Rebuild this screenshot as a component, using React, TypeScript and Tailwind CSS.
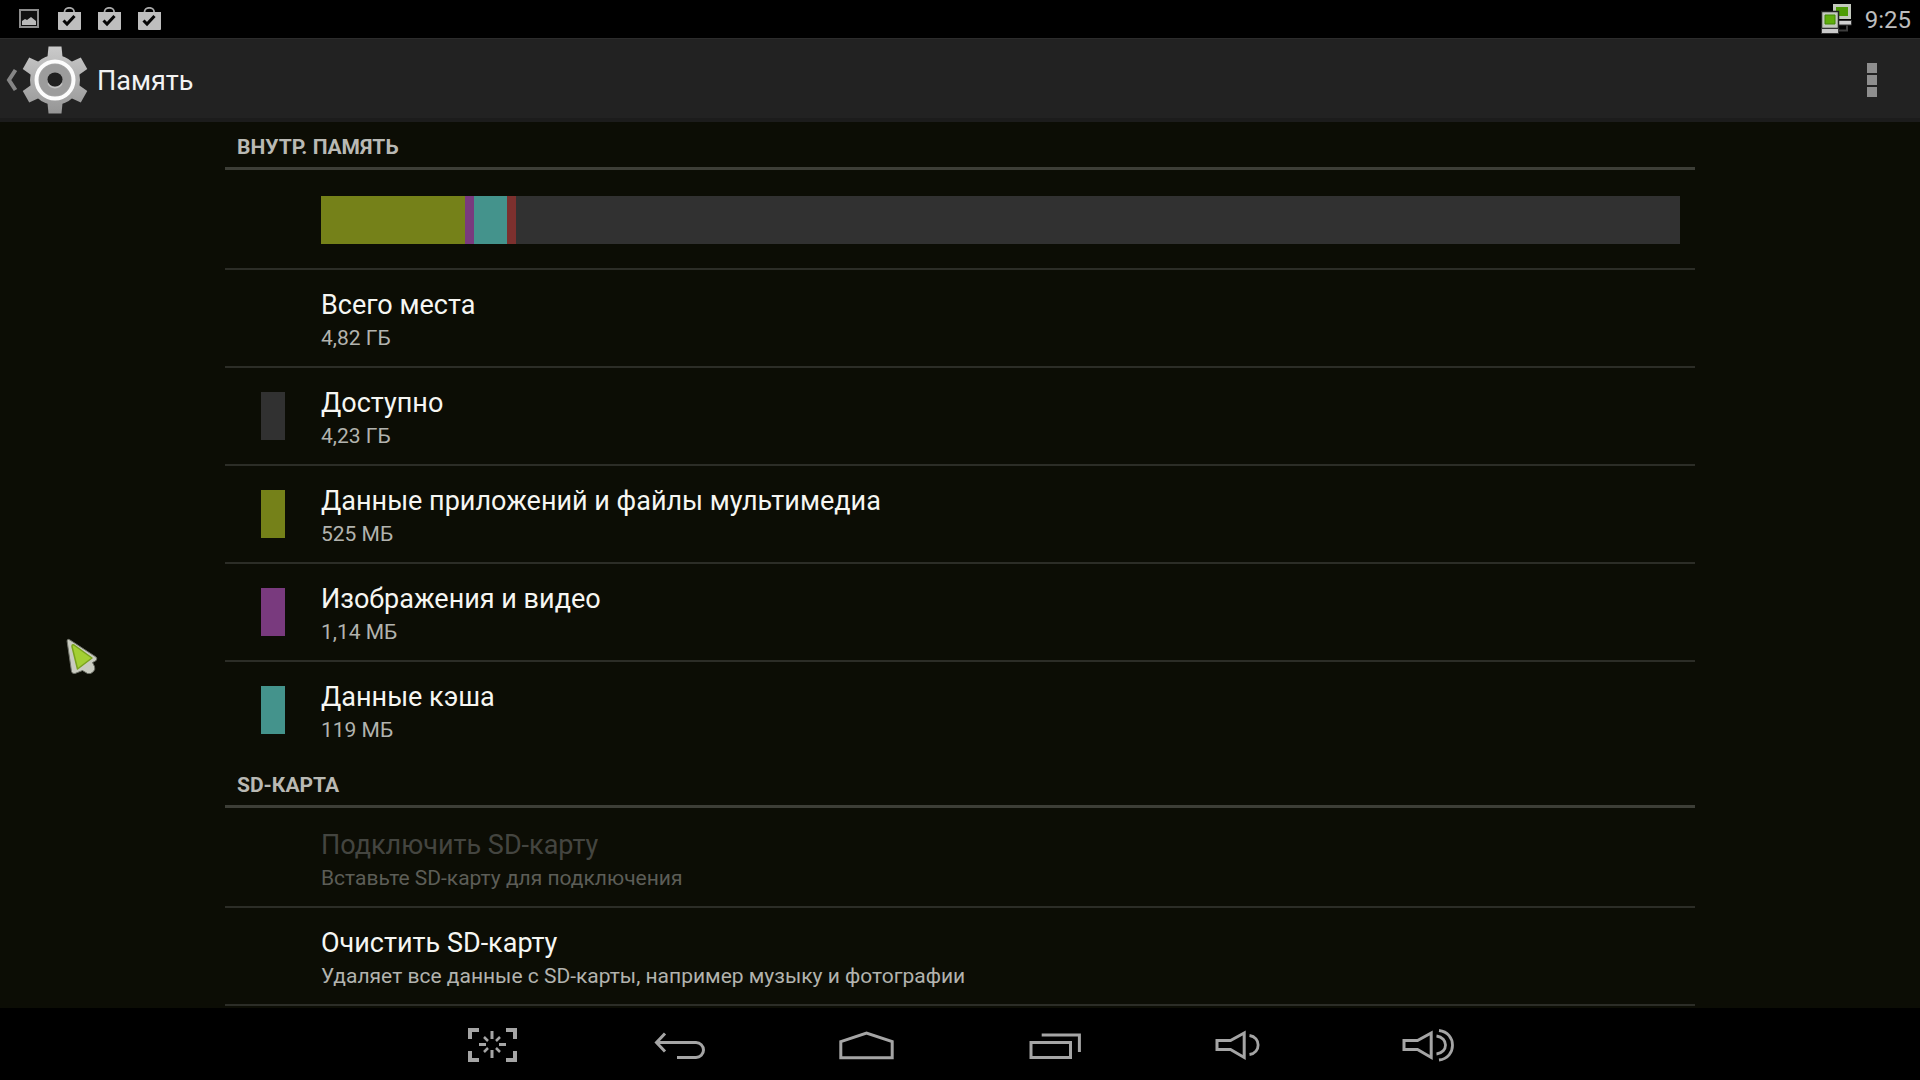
import type { ReactNode } from "react";

type Row = { title: string; summary: string; swatch?: string };

const storage: Row[] = [
  { title: "Всего места", summary: "4,82 ГБ" },
  { title: "Доступно", summary: "4,23 ГБ", swatch: "bg-[#313131]" },
  { title: "Данные приложений и файлы мультимедиа", summary: "525 МБ", swatch: "bg-[#758119]" },
  { title: "Изображения и видео", summary: "1,14 МБ", swatch: "bg-[#793a7e]" },
  { title: "Данные кэша", summary: "119 МБ", swatch: "bg-[#44938c]" },
];

const usage = [
  { name: "Приложения", width: 144, color: "bg-[#758119]" },
  { name: "Изображения", width: 9, color: "bg-[#793a7e]" },
  { name: "Кэш", width: 33, color: "bg-[#44938c]" },
  { name: "Прочее", width: 9, color: "bg-[#7c302e]" },
];

function SectionHeader({ children }: { children: ReactNode }) {
  return (
    <div className="pb-0.5">
      <h2 className="flex h-12 items-center border-b-3 border-[#3d3e37] pl-3 pt-1 text-[21px] font-bold leading-6 text-[#b9b9b4]">
        {children}
      </h2>
    </div>
  );
}

function RowText({ title, summary, disabled }: Row & { disabled?: boolean }) {
  return (
    <span className="flex flex-col pt-1.5 text-left">
      <span
        className={
          disabled ? "text-[27px] leading-[34px] text-[#444540]" : "text-[27px] leading-[34px] text-[#f6f6f2]"
        }
      >
        {title}
      </span>
      <span className={disabled ? "text-[21px] leading-8 text-[#5c5d57]" : "text-[21px] leading-8 text-[#b2b3ae]"}>
        {summary}
      </span>
    </span>
  );
}

function PictureIcon() {
  return (
    <svg className="h-6 w-6" viewBox="0 0 24 24" aria-hidden="true">
      <rect x="3" y="3" width="18" height="17" fill="#111" stroke="#8d8d8d" strokeWidth="2" />
      <path d="M5 18v-4l3-2 2 1 4-3 5 4v4z" fill="#b9b9b9" />
    </svg>
  );
}

function BagIcon() {
  return (
    <svg className="h-6 w-6" viewBox="0 0 24 24" aria-hidden="true">
      <path d="M7.500 6V5a4.800 4.200 0 0 1 9.600 0v1" fill="none" stroke="#a9a9a9" strokeWidth="1.800" />
      <path d="M1 5h23v17.500l-1 .500H2l-1-.500z" fill="#bebebe" />
      <path d="m6.500 13.500 3.500 3.500 7.500-8" fill="none" stroke="#050505" strokeWidth="3" />
    </svg>
  );
}

function NetworkIcon() {
  return (
    <svg className="h-8 w-8" viewBox="0 0 32 32" aria-hidden="true">
      <path d="M12 1h18v15H12z" fill="#c3c9bd" />
      <path d="M15 4h12v9H15z" fill="#4d9c05" />
      <path d="M17 17.500h13.500v4.500H17z" fill="#d0d0d0" stroke="#333" strokeWidth="1" />
      <path d="M26 22.500v5h-8" fill="none" stroke="#3d3d3d" strokeWidth="2" />
      <path d="M.500 8.500h17v17H.500z" fill="#c3c9bd" stroke="#222" strokeWidth="1.500" />
      <path d="M4 12h10v9H4z" fill="#5fae0b" stroke="#438806" strokeWidth="1" />
      <path d="M.500 25.500h17v5H.500z" fill="#c9c9c9" stroke="#333" strokeWidth="1" />
    </svg>
  );
}

function GearIcon() {
  const teeth = [0, 60, 120, 180, 240, 300];
  return (
    <svg className="h-[68px] w-[66px]" viewBox="0 0 66 68" aria-hidden="true">
      <defs>
        <linearGradient id="steel" x1="0" y1="0" x2="0" y2="68" gradientUnits="userSpaceOnUse">
          <stop offset="0" stopColor="#cbcbcb" />
          <stop offset="1" stopColor="#959595" />
        </linearGradient>
      </defs>
      <mask id="teeth">
        {teeth.map((angle) => (
          <path key={angle} d="M26.500 .500h13L41 16H25z" fill="#fff" transform={`rotate(${angle} 33 34)`} />
        ))}
        <circle cx="33" cy="34" r="25" fill="#fff" />
      </mask>
      <rect width="66" height="68" fill="url(#steel)" mask="url(#teeth)" />
      <circle cx="33" cy="34" r="18.500" fill="#a2a2a2" stroke="#fcfcfc" strokeWidth="4" />
      <circle cx="33" cy="34" r="15.500" fill="#9c9c9c" />
      <ellipse cx="33" cy="33.500" rx="7.500" ry="7" fill="#202020" />
      <path d="M26 37.500a8 8 0 0 0 14 0" fill="none" stroke="#c4c4c4" strokeWidth="1.500" />
    </svg>
  );
}

function NavButton({ label, children }: { label: string; children: ReactNode }) {
  return (
    <button type="button" aria-label={label} className="flex h-[72px] w-[187px] items-center justify-center">
      <svg className="h-10 w-[61px]" viewBox="0 0 61 40" fill="none" stroke="#a5a5a5" strokeWidth="3" aria-hidden="true">
        {children}
      </svg>
    </button>
  );
}

const speaker = "M7 16.500h13.500L34.200 9v24.500L20.500 25.500H7z";

export default function App() {
  return (
    <div className="relative flex min-h-screen flex-col bg-[#0c0d05] font-['Roboto','Noto_Sans',sans-serif]">
      <header>
        <div className="flex h-[38px] items-center justify-between bg-black pl-[17px] pr-[9px]">
          <div className="flex items-center gap-4">
            <PictureIcon />
            <BagIcon />
            <BagIcon />
            <BagIcon />
          </div>
          <div className="flex items-center gap-3">
            <NetworkIcon />
            <time className="pt-0.5 text-2xl text-[#bdbdbd]">9:25</time>
          </div>
        </div>
        <div className="flex h-[84px] items-center justify-between border-t border-b-4 border-t-[#2c2c2c] border-b-[#1c1c1c] bg-[#222222] pl-1.5 pr-[37px] pt-0.5">
          <button type="button" className="flex items-center" aria-label="Назад">
            <svg className="h-6 w-4" viewBox="0 0 16 24" fill="none" aria-hidden="true">
              <path d="M9.500 2 3 12l6.500 10" stroke="#858585" strokeWidth="4" />
            </svg>
            <GearIcon />
            <h1 className="pl-[9px] pt-0.5 text-[27px] leading-8 text-[#f3f3f3]">Память</h1>
          </button>
          <button type="button" aria-label="Ещё" className="flex flex-col items-center gap-0.5 px-1.5">
            <span className="size-2.5 bg-[#8e8e8e]" />
            <span className="size-2.5 bg-[#8e8e8e]" />
            <span className="size-2.5 bg-[#8e8e8e]" />
          </button>
        </div>
      </header>

      <main className="flex-1 px-[225px]">
        <section>
          <SectionHeader>ВНУТР. ПАМЯТЬ</SectionHeader>
          <div className="border-b-2 border-[#2c2d27] py-6 pl-24 pr-[15px]">
            <div className="flex h-12 bg-[#313131]">
              {usage.map((part) => (
                <div key={part.name} className={part.color} style={{ width: part.width }} />
              ))}
            </div>
          </div>
          <ul>
            {storage.map((row) => (
              <li
                key={row.title}
                className="flex h-[98px] items-center gap-9 border-b-2 border-[#2c2d27] pl-9 last:border-transparent"
              >
                <span className={row.swatch ? `h-12 w-6 ${row.swatch}` : "h-12 w-6"} />
                <RowText {...row} />
              </li>
            ))}
          </ul>
        </section>
        <section>
          <SectionHeader>SD-КАРТА</SectionHeader>
          <button type="button" disabled className="flex h-[98px] w-full items-center border-b-2 border-[#2c2d27] pl-24">
            <RowText title="Подключить SD-карту" summary="Вставьте SD-карту для подключения" disabled />
          </button>
          <button type="button" className="flex h-[98px] w-full items-center border-b-2 border-[#2c2d27] pl-24">
            <RowText title="Очистить SD-карту" summary="Удаляет все данные с SD-карты, например музыку и фотографии" />
          </button>
        </section>
      </main>

      <nav className="flex justify-center bg-black">
        <NavButton label="Снимок экрана">
          <path d="M17 6H8v9M44 6h9v9M17 36H8v-9M44 36h9v-9" strokeWidth="4" />
          <path d="M30 7v8M30 26v8M17 20.500h7M37 20.500h7" />
          <path d="m22 13 4 4M38 13l-4 4M22 28l4-4M38 28l-4-4" strokeWidth="2.500" />
        </NavButton>
        <NavButton label="Назад">
          <path d="m16 9.500-8.500 9 8.500 9" />
          <path d="M8 18.500h39a7.500 7.500 0 0 1 0 15H28" />
        </NavButton>
        <NavButton label="Домой">
          <path d="m4.800 17.700 25.700-8.700 25.700 8.700v16H4.800z" />
        </NavButton>
        <NavButton label="Недавние">
          <path d="M8 18.500h39.500v15H8zM18.700 11h37.700v17" />
        </NavButton>
        <NavButton label="Тише">
          <path d={speaker} />
          <path d="M39.500 11.500c11.500 1.500 11.500 17.500 0 19" strokeWidth="2.800" />
        </NavButton>
        <NavButton label="Громче">
          <path d={speaker} />
          <path d="M39.500 12c12 1.500 12 16.500 0 18M42 6.500c18 2 18 27.500 0 29.500" strokeWidth="2.800" />
        </NavButton>
      </nav>

      <svg className="pointer-events-none absolute left-[63px] top-[636px] h-11 w-9" viewBox="0 0 36 44" aria-hidden="true">
        <path
          d="M4 4.500q1-2 3-.500l26 17q2 2-.500 4l-3 1.500 2 4q1 3-1 5-3 3-6 2l-5-3-7.500 3q-3 .500-3.500-2z"
          fill="#c9cbc0"
          stroke="#6f7168"
          strokeWidth="1"
        />
        <path d="M9 10.500q0-2.500 2-1.500l18 13-14.500 11z" fill="#a3cf34" stroke="#7aa31d" strokeWidth="1.500" strokeLinejoin="round" />
      </svg>
    </div>
  );
}
